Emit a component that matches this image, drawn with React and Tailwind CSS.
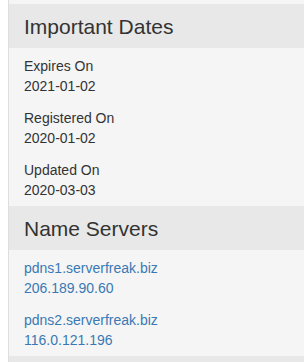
const dates = [
  { label: 'Expires On', value: '2021-01-02' },
  { label: 'Registered On', value: '2020-01-02' },
  { label: 'Updated On', value: '2020-03-03' },
];

const servers = [
  { host: 'pdns1.serverfreak.biz', ip: '206.189.90.60' },
  { host: 'pdns2.serverfreak.biz', ip: '116.0.121.196' },
];

const SectionHeader = ({ title }) => (
  <div className="bg-[#e8e8e8] px-[15px] pt-3 pb-[10px]">
    <h2 className="text-[21px] leading-[22px] text-[#333]">{title}</h2>
  </div>
);

const App = () => {
  return (
    <div className="w-[304px] h-[362px] overflow-hidden bg-white pl-2 font-['Liberation_Sans',Arial,sans-serif]">
      <div className="h-full border-l border-[#dedede] bg-[#f5f5f5]">
        <div className="h-1 bg-[#f5f5f5]" />

        <SectionHeader title="Important Dates" />
        <div className="px-[15px] pt-2 pb-[6px] text-[14px] leading-5 text-[#333]">
          {dates.map((d, i) => (
            <div key={d.label} className={i < dates.length - 1 ? 'mb-3' : ''}>
              <div>{d.label}</div>
              <div>{d.value}</div>
            </div>
          ))}
        </div>

        <SectionHeader title="Name Servers" />
        <div className="px-[15px] pt-2 pb-[6px] text-[14px] leading-5 text-[#3a79b3]">
          {servers.map((s, i) => (
            <div key={s.host} className={i < servers.length - 1 ? 'mb-3' : ''}>
              <a href="#">{s.host}</a>
              <div>
                <a href="#">{s.ip}</a>
              </div>
            </div>
          ))}
        </div>

        <div className="h-4 bg-[#e8e8e8]" />
      </div>
    </div>
  );
};

export default App;
